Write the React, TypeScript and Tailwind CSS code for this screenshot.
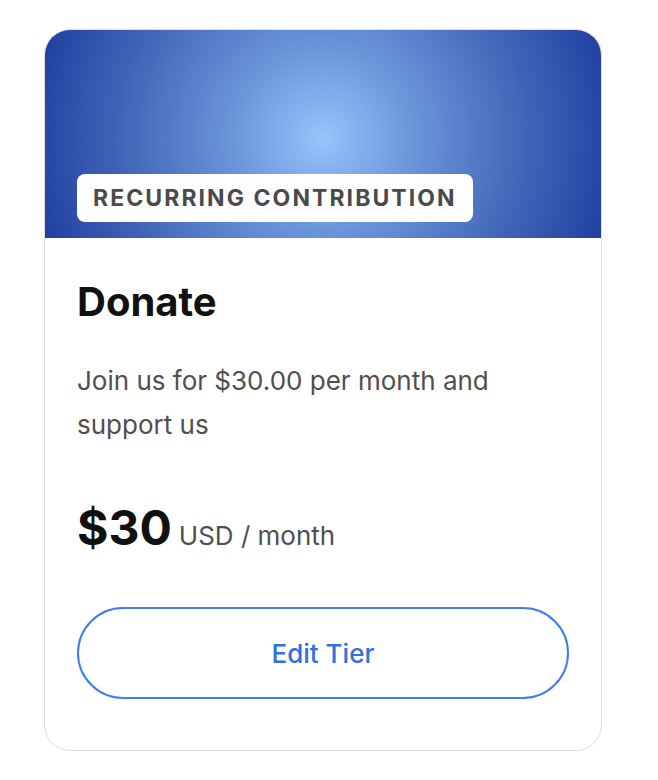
import React from 'react';

const App: React.FC = () => {
  return (
    <div className="min-h-screen bg-white font-['Inter',sans-serif] pt-[29px] pl-[44px]">
      <div className="w-[558px] h-[722px] border border-[#dedede] rounded-[26px] overflow-hidden bg-white flex flex-col">
        <div className="h-[208px] flex items-end px-[32px] pb-[16px] bg-[radial-gradient(circle_at_50%_52%,#96c4fb_0%,#6b96da_30%,#3f62b6_70%,#1f3f9f_100%)]">
          <span className="h-[48px] px-[16px] flex items-center bg-white rounded-[8px] text-[23px] font-bold tracking-[0.09em] text-[#4a4a4a] uppercase">
            Recurring Contribution
          </span>
        </div>
        <div className="flex flex-col px-[32px] pt-[40px]">
          <h2 className="text-[40px] leading-[48px] font-bold text-[#111]">Donate</h2>
          <p className="mt-[33px] text-[26px] leading-[44px] text-[#4f4f4f]">
            Join us for $30.00 per month and support us
          </p>
          <div className="mt-[53px] flex items-baseline gap-[7px]">
            <span className="text-[48px] leading-[56px] font-bold text-[#111]">$30</span>
            <span className="text-[26px] text-[#4f4f4f]">USD / month</span>
          </div>
          <button className="mt-[51px] h-[92px] w-full rounded-full border-2 border-[#3e7ff0] text-[#2f6fe4] text-[26px] font-medium">
            Edit Tier
          </button>
        </div>
      </div>
    </div>
  );
};

export default App;
